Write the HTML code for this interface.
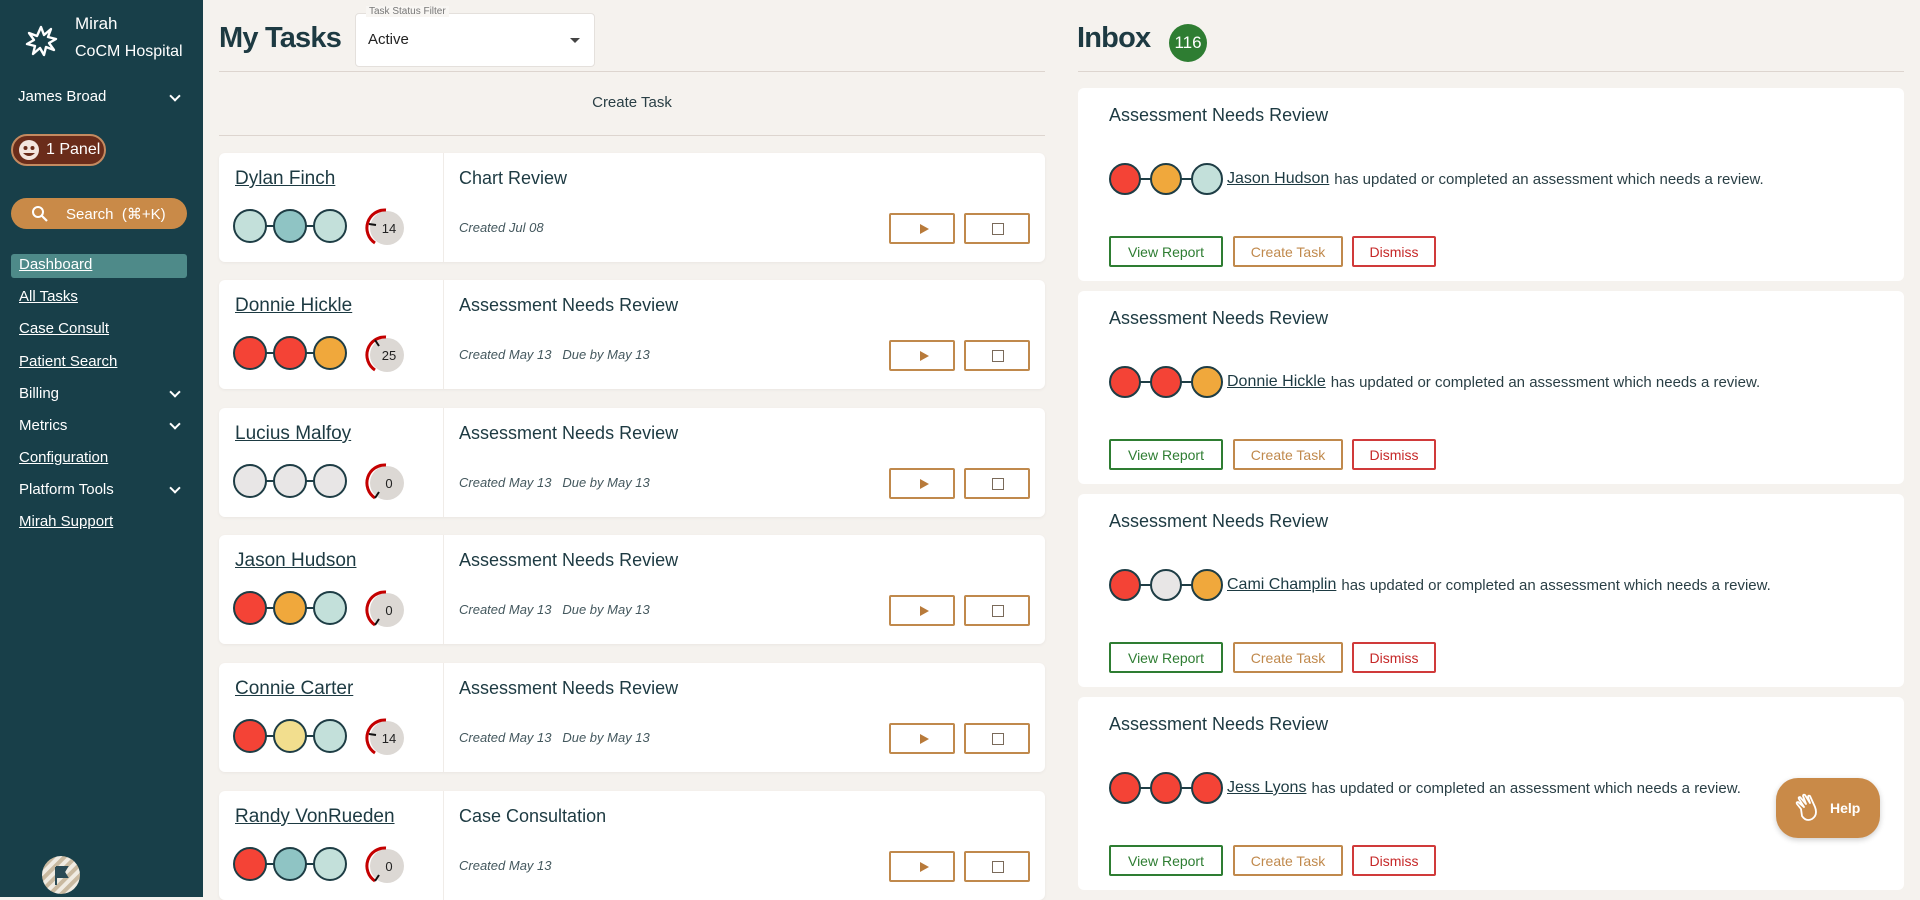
<!DOCTYPE html>
<html><head><meta charset="utf-8">
<style>
*{box-sizing:border-box;margin:0;padding:0}
body{width:1920px;height:897px;overflow:hidden;background:#f5f2ee;font-family:"Liberation Sans",sans-serif;color:#1d3a42;position:relative}
.sb{position:absolute;left:0;top:0;width:203px;height:897px;background:#183f49;color:#fff}
.abs{position:absolute}
.nav{position:absolute;left:19px;font-size:15px;color:#fff;text-decoration:underline}
.navn{position:absolute;left:19px;font-size:15px;color:#fff}
.chev{position:absolute;left:171px;width:8px;height:8px;border-right:2px solid #fff;border-bottom:2px solid #fff;transform:rotate(45deg)}
.card{position:absolute;left:219px;width:826px;height:109px;background:#fff;border-radius:6px;box-shadow:0 1px 3px rgba(0,0,0,.05)}
.card .sp{position:absolute;left:224px;top:0;width:1px;height:100%;background:#f0ece8}
.card .nm{position:absolute;left:16px;top:15px;font-size:19px;text-decoration:underline;color:#1d3a42}
.card .ti{position:absolute;left:240px;top:15px;font-size:18px}
.card .cr{position:absolute;left:240px;top:67px;font-size:13px;font-style:italic;color:#44585e}
.card .cir{position:absolute;left:14px;top:55px}
.card .g{position:absolute;left:144px;top:53px}
.btn{position:absolute;top:60px;width:66px;height:31px;border:2px solid #c0894c;border-radius:2px}
.b1{left:670px}.b2{left:745px}
.tri{position:absolute;left:29px;top:9px;width:0;height:0;border-left:9px solid #b87a3a;border-top:5.5px solid transparent;border-bottom:5.5px solid transparent}
.sq{position:absolute;left:26px;top:8px;width:12px;height:12px;border:1.5px solid #7a6a5a}
.ic{position:absolute;left:1078px;width:826px;height:193px;background:#fff;border-radius:6px}
.ic .ti{position:absolute;left:31px;top:17px;font-size:18px}
.ic .ln{position:absolute;left:31px;top:74px;height:34px;display:flex;align-items:center;font-size:15px;color:#2a3f45}
.ic .ln u{font-size:16px;margin:0 5px 0 4px;color:#1d3a42}
.ib{position:absolute;top:148px;height:31px;border:2px solid;border-radius:2px;font-size:14px;display:flex;align-items:center;justify-content:center}
.vr{left:31px;width:114px;color:#2e7d32;border-color:#2e7d32}
.ct{left:155px;width:110px;color:#c0894c;border-color:#c0894c}
.dm{left:274px;width:84px;color:#c62828;border-color:#d03a3a}
</style></head><body>
<div class="sb">
 <svg class="abs" style="left:24px;top:24px" width="34" height="34" viewBox="0 0 34 34"><path d="M17 3 L20 11 L27 5 L24 13 L32 15 L25 19 L30 26 L22 23 L20 31 L16 24 L9 30 L11 22 L3 20 L10 16 L5 9 L13 12 Z" fill="none" stroke="#fff" stroke-width="2.4" stroke-linejoin="round"/></svg>
 <div class="abs" style="left:75px;top:14px;font-size:17px">Mirah</div>
 <div class="abs" style="left:75px;top:43px;font-size:16px">CoCM Hospital</div>
 <div class="abs" style="left:18px;top:88px;font-size:15px">James Broad</div>
 <div class="chev" style="top:92px"></div>
 <div class="abs" style="left:11px;top:134px;width:95px;height:32px;border-radius:16px;background:#6a2c1a;border:2px solid #c48a60;"></div>
 <svg class="abs" style="left:17px;top:138px" width="24" height="24"><circle cx="12" cy="12" r="10" fill="#f3e6df"/><circle cx="8.5" cy="10" r="2" fill="#6a2c1a"/><circle cx="15.5" cy="10" r="2" fill="#6a2c1a"/><path d="M6 15 Q12 21 18 15" fill="#6a2c1a"/></svg>
 <div class="abs" style="left:46px;top:141px;font-size:16px">1 Panel</div>
 <div class="abs" style="left:11px;top:198px;width:176px;height:31px;border-radius:16px;background:#c98a48"></div>
 <svg class="abs" style="left:31px;top:205px" width="18" height="18"><circle cx="7" cy="7" r="5" fill="none" stroke="#fff" stroke-width="2"/><path d="M11 11 L16 16" stroke="#fff" stroke-width="2.2"/></svg>
 <div class="abs" style="left:66px;top:205px;font-size:15px;color:#fff">Search&nbsp;&nbsp;(⌘+K)</div>
 <div class="abs" style="left:11px;top:254px;width:176px;height:24px;border-radius:3px;background:#4e8a89"></div>
 <div class="nav" style="top:256px">Dashboard</div>
 <div class="nav" style="top:288px">All Tasks</div>
 <div class="nav" style="top:320px">Case Consult</div>
 <div class="nav" style="top:353px">Patient Search</div>
 <div class="navn" style="top:385px">Billing</div><div class="chev" style="top:388px"></div>
 <div class="navn" style="top:417px">Metrics</div><div class="chev" style="top:420px"></div>
 <div class="nav" style="top:449px">Configuration</div>
 <div class="navn" style="top:481px">Platform Tools</div><div class="chev" style="top:484px"></div>
 <div class="nav" style="top:513px">Mirah Support</div>
 <svg class="abs" style="left:41px;top:855px" width="40" height="40"><defs><pattern id="st" width="8" height="8" patternUnits="userSpaceOnUse" patternTransform="rotate(45)"><rect width="4" height="8" fill="#c9b9a0"/><rect x="4" width="4" height="8" fill="#f0ebe2"/></pattern></defs><circle cx="20" cy="20" r="19" fill="url(#st)"/><path d="M15 12 V30 M15 12 H26 L23 17 L26 22 H15" fill="#2a4a55" stroke="#2a4a55" stroke-width="2"/></svg>
</div>

<div class="abs" style="left:219px;top:22px;font-size:29px;font-weight:bold;color:#1d3a42;letter-spacing:-.8px">My Tasks</div>
<div class="abs" style="left:355px;top:13px;width:240px;height:54px;background:#fff;border:1px solid #e4e0dc;border-radius:4px"></div>
<div class="abs" style="left:366px;top:6px;font-size:10px;color:#777;background:#f8f6f3;padding:0 3px">Task Status Filter</div>
<div class="abs" style="left:368px;top:31px;font-size:15px;color:#222">Active</div>
<div class="abs" style="left:570px;top:38px;width:0;height:0;border-left:5px solid transparent;border-right:5px solid transparent;border-top:5px solid #444"></div>
<div class="abs" style="left:219px;top:71px;width:826px;height:1px;background:#ddd5cf"></div>
<div class="abs" style="left:219px;top:94px;width:826px;text-align:center;font-size:15px;color:#2a3f45">Create Task</div>
<div class="abs" style="left:219px;top:135px;width:826px;height:1px;background:#ddd5cf"></div>

<!-- tasks -->
<div class="card" style="top:153px"><div class="sp"></div><div class="nm">Dylan Finch</div><div class="ti">Chart Review</div><div class="cr">Created Jul 08</div>
<svg class="cir" width="115" height="36"><path d="M17 18H97" stroke="#1e3d45" stroke-width="2"/><circle cx="17" cy="18" r="16" fill="#c3e0da" stroke="#1e3d45" stroke-width="2"/><circle cx="57" cy="18" r="16" fill="#8fc4c4" stroke="#1e3d45" stroke-width="2"/><circle cx="97" cy="18" r="16" fill="#c3e0da" stroke="#1e3d45" stroke-width="2"/></svg>
<svg class="g" width="44" height="44"><circle cx="24" cy="22" r="17" fill="#dcd8d4"/><path d="M23 4 A18 18 0 0 0 12 37" fill="none" stroke="#c40000" stroke-width="3"/><path d="M6 18 L13 19" stroke="#111" stroke-width="2"/><text x="26" y="27" font-size="13" text-anchor="middle" fill="#222" font-family="Liberation Sans">14</text></svg>
<div class="btn b1"><div class="tri"></div></div><div class="btn b2"><div class="sq"></div></div></div>

<div class="card" style="top:280px"><div class="sp"></div><div class="nm">Donnie Hickle</div><div class="ti">Assessment Needs Review</div><div class="cr">Created May 13&nbsp;&nbsp; Due by May 13</div>
<svg class="cir" width="115" height="36"><path d="M17 18H97" stroke="#1e3d45" stroke-width="2"/><circle cx="17" cy="18" r="16" fill="#f44336" stroke="#1e3d45" stroke-width="2"/><circle cx="57" cy="18" r="16" fill="#f44336" stroke="#1e3d45" stroke-width="2"/><circle cx="97" cy="18" r="16" fill="#f0a83c" stroke="#1e3d45" stroke-width="2"/></svg>
<svg class="g" width="44" height="44"><circle cx="24" cy="22" r="17" fill="#dcd8d4"/><path d="M23 4 A18 18 0 0 0 12 37" fill="none" stroke="#c40000" stroke-width="3"/><path d="M12 7 L16 13" stroke="#111" stroke-width="2"/><text x="26" y="27" font-size="13" text-anchor="middle" fill="#222" font-family="Liberation Sans">25</text></svg>
<div class="btn b1"><div class="tri"></div></div><div class="btn b2"><div class="sq"></div></div></div>

<div class="card" style="top:408px"><div class="sp"></div><div class="nm">Lucius Malfoy</div><div class="ti">Assessment Needs Review</div><div class="cr">Created May 13&nbsp;&nbsp; Due by May 13</div>
<svg class="cir" width="115" height="36"><path d="M17 18H97" stroke="#1e3d45" stroke-width="2"/><circle cx="17" cy="18" r="16" fill="#e8e6e6" stroke="#1e3d45" stroke-width="2"/><circle cx="57" cy="18" r="16" fill="#e8e6e6" stroke="#1e3d45" stroke-width="2"/><circle cx="97" cy="18" r="16" fill="#e8e6e6" stroke="#1e3d45" stroke-width="2"/></svg>
<svg class="g" width="44" height="44"><circle cx="24" cy="22" r="17" fill="#dcd8d4"/><path d="M23 4 A18 18 0 0 0 12 37" fill="none" stroke="#c40000" stroke-width="3"/><path d="M12 37 L16 31" stroke="#111" stroke-width="2"/><text x="26" y="27" font-size="13" text-anchor="middle" fill="#222" font-family="Liberation Sans">0</text></svg>
<div class="btn b1"><div class="tri"></div></div><div class="btn b2"><div class="sq"></div></div></div>

<div class="card" style="top:535px"><div class="sp"></div><div class="nm">Jason Hudson</div><div class="ti">Assessment Needs Review</div><div class="cr">Created May 13&nbsp;&nbsp; Due by May 13</div>
<svg class="cir" width="115" height="36"><path d="M17 18H97" stroke="#1e3d45" stroke-width="2"/><circle cx="17" cy="18" r="16" fill="#f44336" stroke="#1e3d45" stroke-width="2"/><circle cx="57" cy="18" r="16" fill="#f0a83c" stroke="#1e3d45" stroke-width="2"/><circle cx="97" cy="18" r="16" fill="#c3e0da" stroke="#1e3d45" stroke-width="2"/></svg>
<svg class="g" width="44" height="44"><circle cx="24" cy="22" r="17" fill="#dcd8d4"/><path d="M23 4 A18 18 0 0 0 12 37" fill="none" stroke="#c40000" stroke-width="3"/><path d="M12 37 L16 31" stroke="#111" stroke-width="2"/><text x="26" y="27" font-size="13" text-anchor="middle" fill="#222" font-family="Liberation Sans">0</text></svg>
<div class="btn b1"><div class="tri"></div></div><div class="btn b2"><div class="sq"></div></div></div>

<div class="card" style="top:663px"><div class="sp"></div><div class="nm">Connie Carter</div><div class="ti">Assessment Needs Review</div><div class="cr">Created May 13&nbsp;&nbsp; Due by May 13</div>
<svg class="cir" width="115" height="36"><path d="M17 18H97" stroke="#1e3d45" stroke-width="2"/><circle cx="17" cy="18" r="16" fill="#f44336" stroke="#1e3d45" stroke-width="2"/><circle cx="57" cy="18" r="16" fill="#f2de8e" stroke="#1e3d45" stroke-width="2"/><circle cx="97" cy="18" r="16" fill="#c3e0da" stroke="#1e3d45" stroke-width="2"/></svg>
<svg class="g" width="44" height="44"><circle cx="24" cy="22" r="17" fill="#dcd8d4"/><path d="M23 4 A18 18 0 0 0 12 37" fill="none" stroke="#c40000" stroke-width="3"/><path d="M6 18 L13 19" stroke="#111" stroke-width="2"/><text x="26" y="27" font-size="13" text-anchor="middle" fill="#222" font-family="Liberation Sans">14</text></svg>
<div class="btn b1"><div class="tri"></div></div><div class="btn b2"><div class="sq"></div></div></div>

<div class="card" style="top:791px"><div class="sp"></div><div class="nm">Randy VonRueden</div><div class="ti">Case Consultation</div><div class="cr">Created May 13</div>
<svg class="cir" width="115" height="36"><path d="M17 18H97" stroke="#1e3d45" stroke-width="2"/><circle cx="17" cy="18" r="16" fill="#f44336" stroke="#1e3d45" stroke-width="2"/><circle cx="57" cy="18" r="16" fill="#8fc4c4" stroke="#1e3d45" stroke-width="2"/><circle cx="97" cy="18" r="16" fill="#c3e0da" stroke="#1e3d45" stroke-width="2"/></svg>
<svg class="g" width="44" height="44"><circle cx="24" cy="22" r="17" fill="#dcd8d4"/><path d="M23 4 A18 18 0 0 0 12 37" fill="none" stroke="#c40000" stroke-width="3"/><path d="M12 37 L16 31" stroke="#111" stroke-width="2"/><text x="26" y="27" font-size="13" text-anchor="middle" fill="#222" font-family="Liberation Sans">0</text></svg>
<div class="btn b1"><div class="tri"></div></div><div class="btn b2"><div class="sq"></div></div></div>

<!-- inbox -->
<div class="abs" style="left:1077px;top:22px;font-size:29px;font-weight:bold;letter-spacing:-.8px">Inbox</div>
<div class="abs" style="left:1169px;top:24px;width:38px;height:38px;border-radius:50%;background:#2e7d32;color:#fff;font-size:17px;display:flex;align-items:center;justify-content:center">116</div>
<div class="abs" style="left:1078px;top:71px;width:826px;height:1px;background:#ddd5cf"></div>

<div class="ic" style="top:88px"><div class="ti">Assessment Needs Review</div>
<div class="ln"><svg width="114" height="34"><path d="M16 17H98" stroke="#1e3d45" stroke-width="2"/><circle cx="16" cy="17" r="15" fill="#f44336" stroke="#1e3d45" stroke-width="2"/><circle cx="57" cy="17" r="15" fill="#f0a83c" stroke="#1e3d45" stroke-width="2"/><circle cx="98" cy="17" r="15" fill="#c3e0da" stroke="#1e3d45" stroke-width="2"/></svg><u>Jason Hudson</u>has updated or completed an assessment which needs a review.</div>
<div class="ib vr">View Report</div><div class="ib ct">Create Task</div><div class="ib dm">Dismiss</div></div>

<div class="ic" style="top:291px"><div class="ti">Assessment Needs Review</div>
<div class="ln"><svg width="114" height="34"><path d="M16 17H98" stroke="#1e3d45" stroke-width="2"/><circle cx="16" cy="17" r="15" fill="#f44336" stroke="#1e3d45" stroke-width="2"/><circle cx="57" cy="17" r="15" fill="#f44336" stroke="#1e3d45" stroke-width="2"/><circle cx="98" cy="17" r="15" fill="#f0a83c" stroke="#1e3d45" stroke-width="2"/></svg><u>Donnie Hickle</u>has updated or completed an assessment which needs a review.</div>
<div class="ib vr">View Report</div><div class="ib ct">Create Task</div><div class="ib dm">Dismiss</div></div>

<div class="ic" style="top:494px"><div class="ti">Assessment Needs Review</div>
<div class="ln"><svg width="114" height="34"><path d="M16 17H98" stroke="#1e3d45" stroke-width="2"/><circle cx="16" cy="17" r="15" fill="#f44336" stroke="#1e3d45" stroke-width="2"/><circle cx="57" cy="17" r="15" fill="#e8e6e6" stroke="#1e3d45" stroke-width="2"/><circle cx="98" cy="17" r="15" fill="#f0a83c" stroke="#1e3d45" stroke-width="2"/></svg><u>Cami Champlin</u>has updated or completed an assessment which needs a review.</div>
<div class="ib vr">View Report</div><div class="ib ct">Create Task</div><div class="ib dm">Dismiss</div></div>

<div class="ic" style="top:697px"><div class="ti">Assessment Needs Review</div>
<div class="ln"><svg width="114" height="34"><path d="M16 17H98" stroke="#1e3d45" stroke-width="2"/><circle cx="16" cy="17" r="15" fill="#f44336" stroke="#1e3d45" stroke-width="2"/><circle cx="57" cy="17" r="15" fill="#f44336" stroke="#1e3d45" stroke-width="2"/><circle cx="98" cy="17" r="15" fill="#f44336" stroke="#1e3d45" stroke-width="2"/></svg><u>Jess Lyons</u>has updated or completed an assessment which needs a review.</div>
<div class="ib vr">View Report</div><div class="ib ct">Create Task</div><div class="ib dm">Dismiss</div></div>

<div class="abs" style="left:1776px;top:778px;width:104px;height:60px;border-radius:22px;background:#c98a48;box-shadow:0 2px 6px rgba(0,0,0,.2)"></div>
<svg class="abs" style="left:1793px;top:793px" width="30" height="30" viewBox="0 0 30 30"><path d="M8 16 L4 11 Q3 9 5 9 L11 14 L6 6 Q5 4 7 4 L13 11 L10 3 Q10 1 12 2 L17 10 L15 4 Q15 2 17 3 L22 14 Q25 22 19 26 Q13 29 9 23 Z" fill="none" stroke="#fff" stroke-width="1.8" stroke-linejoin="round"/></svg>
<div class="abs" style="left:1830px;top:800px;font-size:14px;font-weight:bold;color:#fff">Help</div>
</body></html>
